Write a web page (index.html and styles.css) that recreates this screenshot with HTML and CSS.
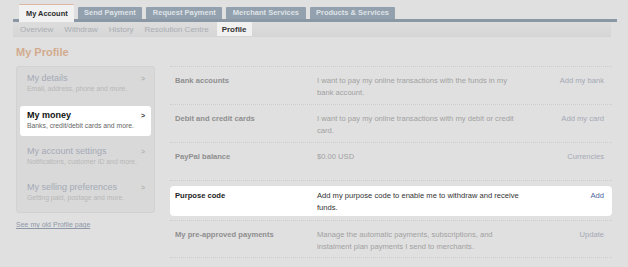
FILE: index.html
```html
<!DOCTYPE html>
<html>
<head>
<meta charset="utf-8">
<link rel="stylesheet" href="styles.css">
</head>
<body>
<div class="page">
  <div class="tabs">
    <span class="tab active">My Account</span>
    <span class="tab">Send Payment</span>
    <span class="tab">Request Payment</span>
    <span class="tab">Merchant Services</span>
    <span class="tab">Products &amp; Services</span>
  </div>
  <div class="subnav">
    <span class="sub">Overview</span>
    <span class="sub">Withdraw</span>
    <span class="sub">History</span>
    <span class="sub">Resolution Centre</span>
    <span class="sub current">Profile</span>
  </div>
  <h1 class="title">My Profile</h1>
  <div class="main">
    <div class="side">
      <div class="menu">
        <div class="item">
          <div class="item-head"><span class="item-title">My details</span><span class="chev">&gt;</span></div>
          <div class="item-sub">Email, address, phone and more.</div>
        </div>
        <div class="item hl">
          <div class="item-head"><span class="item-title">My money</span><span class="chev">&gt;</span></div>
          <div class="item-sub">Banks, credit/debit cards and more.</div>
        </div>
        <div class="item">
          <div class="item-head"><span class="item-title">My account settings</span><span class="chev">&gt;</span></div>
          <div class="item-sub">Notifications, customer ID and more.</div>
        </div>
        <div class="item">
          <div class="item-head"><span class="item-title">My selling preferences</span><span class="chev">&gt;</span></div>
          <div class="item-sub">Getting paid, postage and more.</div>
        </div>
      </div>
      <a class="old">See my old Profile page</a>
    </div>
    <div class="table">
      <div class="row">
        <div class="label">Bank accounts</div>
        <div class="desc">I want to pay my online transactions with the funds in my bank account.</div>
        <div class="act">Add my bank</div>
      </div>
      <div class="row">
        <div class="label">Debit and credit cards</div>
        <div class="desc">I want to pay my online transactions with my debit or credit card.</div>
        <div class="act">Add my card</div>
      </div>
      <div class="row">
        <div class="label">PayPal balance</div>
        <div class="desc">$0.00 USD</div>
        <div class="act">Currencies</div>
      </div>
      <div class="row hl">
        <div class="label">Purpose code</div>
        <div class="desc">Add my purpose code to enable me to withdraw and receive funds.</div>
        <div class="act">Add</div>
      </div>
      <div class="row">
        <div class="label">My pre-approved payments</div>
        <div class="desc">Manage the automatic payments, subscriptions, and instalment plan payments I send to merchants.</div>
        <div class="act">Update</div>
      </div>
    </div>
  </div>
</div>
</body>
</html>
```
FILE: styles.css
```css
html, body {
  margin: 0;
  padding: 0;
  background: #e0e0e0;
  font-family: "Liberation Sans", Arial, sans-serif;
  overflow: hidden;
}
.page {
  width: 628px;
  height: 267px;
}
.tabs {
  margin-left: 13px;
  width: 598px;
  height: 19px;
  border-bottom: 3px solid #8a98a6;
  padding-left: 6px;
  box-sizing: content-box;
  display: flex;
  align-items: flex-end;
  gap: 4px;
}
.tab {
  height: 12px;
  line-height: 12px;
  padding: 0 6.5px;
  background: #93a1ae;
  color: #dfe3e7;
  font-size: 7.5px;
  font-weight: bold;
  border-radius: 1px 1px 0 0;
}
.tab.active {
  height: 17px;
  line-height: 17px;
  margin-bottom: -3px;
  padding: 0 6px 0 7px;
  font-size: 7.4px;
  background: #f1f1f1;
  color: #2a2a2a;
  border-top: 1px solid #dcb8a4;
}
.subnav {
  margin-left: 13px;
  width: 598px;
  height: 15px;
  background: linear-gradient(#dddddd, #d6d6d6);
  border-bottom: 1px solid #d2d5d8;
  display: flex;
  padding-left: 7px;
  gap: 11px;
  box-sizing: border-box;
}
.sub {
  font-size: 8px;
  line-height: 15px;
  color: #a9adb3;
}
.sub.current {
  background: #f1f1f1;
  color: #333;
  font-weight: bold;
  padding: 0 5px;
  margin-left: -3px;
}
.title {
  margin: 9px 0 0 16px;
  height: 15px;
  font-size: 11px;
  font-weight: bold;
  color: #d2ab8e;
  line-height: 13px;
}
.main {
  display: flex;
  margin-top: 5px;
  padding-left: 16px;
}
.side {
  width: 139px;
}
.menu {
  background: #d9d9d9;
  border: 1px solid #d2d2d2;
  border-radius: 3px;
  padding: 4px 3px;
  box-sizing: border-box;
  height: 147px;
}
.item {
  padding: 2px 6px 4px 7px;
  height: 34px;
  box-sizing: border-box;
}
.item + .item {
  height: 36px;
}
.item-head {
  display: flex;
  justify-content: space-between;
  align-items: center;
}
.item-title {
  font-size: 9px;
  color: #a4a9b6;
}
.chev {
  font-size: 7px;
  color: #b3b3b3;
  font-weight: bold;
}
.item-sub {
  font-size: 6.8px;
  color: #b8b8b8;
  margin-top: 2px;
}
.item.hl {
  background: #ffffff;
  border-radius: 3px;
  height: 30px;
  margin: 1px 0 8px;
  padding-top: 4px;
}
.item.hl .item-title {
  color: #111;
  font-weight: bold;
}
.item.hl .chev { color: #333; }
.item.hl .item-sub { color: #666; }
.old {
  display: block;
  margin-top: 8px;
  font-size: 7px;
  color: #8f98a8;
  text-decoration: underline;
}
.table {
  margin-left: 15px;
  width: 442px;
  border-top: 1px dotted #cccccc;
}
.row {
  display: flex;
  border-bottom: 1px dotted #cccccc;
  height: 38px;
  box-sizing: border-box;
  padding: 8px 8px 0 5px;
  font-size: 7.6px;
  line-height: 12px;
}
.label {
  width: 142px;
  color: #8f8f8f;
  font-weight: bold;
}
.desc {
  width: 206px;
  color: #a0a0a0;
}
.act {
  flex: 1;
  text-align: right;
  color: #a4a9b5;
}
.row.hl {
  background: #fff;
  border-radius: 4px;
  border-bottom: none;
  margin: 5px 0 4px 0;
  height: 30px;
  padding: 4px 8px 0 5px;
}
.row.hl + .row {
  border-top: 1px dotted #cccccc;
}
.row.hl .label { color: #222; }
.row.hl .desc { color: #333; }
.row.hl .act { color: #5069a0; }
```
